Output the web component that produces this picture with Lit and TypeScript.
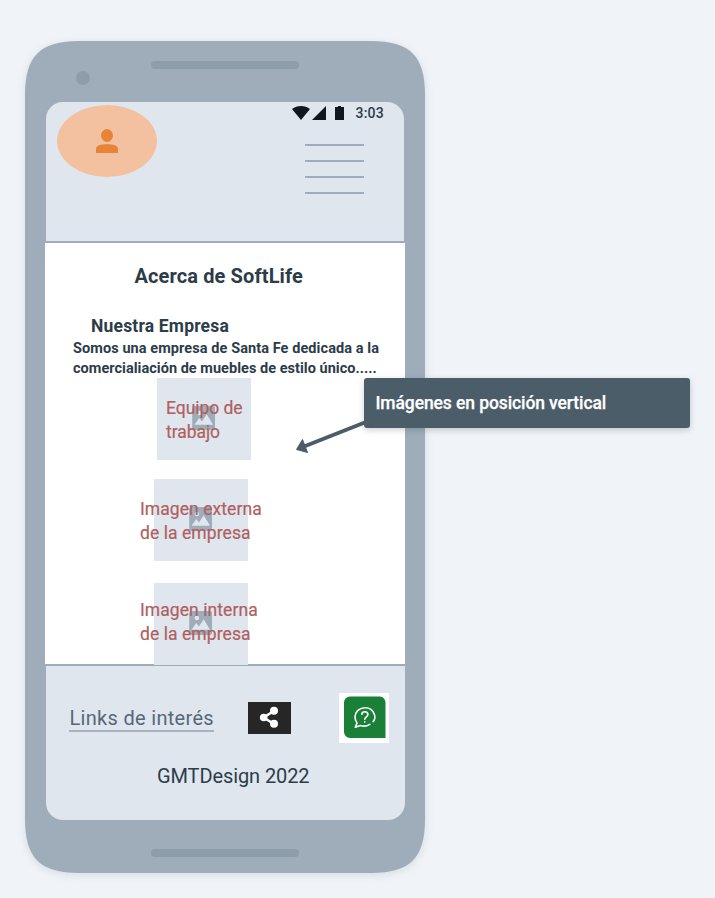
import { LitElement, html, svg, css } from "lit";
import { customElement, property } from "lit/decorators.js";

@customElement("image-slot")
export class ImageSlot extends LitElement {
  @property() caption = "";

  static styles = css`
    :host {
      display: grid;
      position: relative;
      width: 94px;
      height: 81.5px;
      background: #dfe6ee;
    }
    .glyph {
      display: block;
      position: absolute;
      left: 34.5px;
      top: 28px;
      width: 23.5px;
      height: 24px;
    }
    .caption {
      position: absolute;
      left: var(--caption-left, -14px);
      top: var(--caption-top, 18px);
      white-space: pre;
      font-size: 17.5px;
      line-height: 24px;
      letter-spacing: var(--caption-spacing, 0.07px);
      color: #b1605f;
      -webkit-text-stroke: 0.2px #b1605f;
    }
  `;

  render() {
    return html`
      <svg class="glyph" viewBox="0 0 23 24">
        <rect width="23" height="24" rx="2.5" fill="#9eadb9" />
        <circle cx="7.6" cy="7" r="2.3" fill="#dfe6ee" />
        <path d="M2.3 18.7 7 12l2.7 3.6L14.4 8.3 20.8 18.7Z" fill="#dfe6ee" />
      </svg>
      <div class="caption">${this.caption}</div>
    `;
  }
}

@customElement("app-root")
export class AppRoot extends LitElement {
  static styles = css`
    :host {
      display: block;
      position: relative;
      width: 715px;
      height: 898px;
      overflow: hidden;
      background: #f0f4f8;
      font-family: Roboto, "Liberation Sans", sans-serif;
      color: #2c3c49;
    }
    svg {
      display: block;
    }
    .phone {
      position: absolute;
      left: 25px;
      top: 41px;
      width: 400px;
      height: 832px;
      display: flex;
      flex-direction: column;
    }
    .shell {
      position: absolute;
      inset: 0;
      overflow: visible;
      filter: drop-shadow(0 2px 4px rgba(60, 80, 100, 0.14));
    }
    .bezel {
      position: relative;
      height: 61px;
      flex: none;
    }
    .speaker {
      position: relative;
      width: 148px;
      height: 8px;
      border-radius: 4px;
      margin: 20px 0 0 126px;
      background: #8e9dac;
    }
    .camera {
      position: absolute;
      left: 51px;
      top: 30px;
      width: 14px;
      height: 14px;
      border-radius: 50%;
      background: #8e9dac;
    }
    .screen {
      position: relative;
      width: 360px;
      height: 718px;
      margin-left: 20px;
      display: flex;
      flex-direction: column;
      white-space: nowrap;
    }
    .top {
      height: 139px;
      margin: 0 1px;
      border-radius: 17px 17px 0 0;
      background: #dfe6ee;
      display: flex;
      justify-content: space-between;
    }
    .avatar {
      width: 100px;
      height: 72px;
      margin: 3px 0 0 11px;
      border-radius: 50%;
      background: #f3c19f;
      display: grid;
      place-items: center;
    }
    .right {
      width: 112.5px;
    }
    .status {
      display: flex;
      height: 22px;
      align-items: center;
    }
    .clock {
      font-size: 14px;
      font-weight: 500;
      letter-spacing: 0.2px;
      margin-left: 11px;
    }
    .menu {
      width: 59px;
      margin: 20px 0 0 13.5px;
      display: grid;
      gap: 14px;
    }
    .menu i {
      height: 2px;
      background: #9eadb9;
    }
    .content {
      height: 421px;
      margin-top: 2px;
      background: #fff;
    }
    h1,
    h2,
    p {
      margin: 0;
    }
    h1 {
      padding: 19px 0 0 89.5px;
      font-size: 20px;
      line-height: 28px;
      font-weight: 700;
      letter-spacing: 0.12px;
    }
    h2 {
      padding: 24px 0 0 46px;
      font-size: 17.5px;
      line-height: 24px;
      font-weight: 700;
      letter-spacing: 0.18px;
    }
    .about {
      position: relative;
      top: 1px;
      padding-left: 28px;
      font-size: 14.5px;
      line-height: 20px;
      font-weight: 700;
      letter-spacing: 0.08px;
    }
    .tight {
      letter-spacing: 0.03px;
    }
    .gallery {
      display: flex;
      flex-direction: column;
      align-items: flex-start;
      padding-left: 109px;
      position: relative;
      z-index: 1;
    }
    .first {
      margin-left: 3px;
      --caption-left: 9px;
      --caption-spacing: -0.05px;
    }
    .second {
      margin-top: 19.5px;
    }
    .third {
      margin-top: 22.5px;
      --caption-top: 15px;
    }
    .foot {
      height: 154px;
      margin: 2px 0 0 1px;
      border-radius: 0 0 17px 17px;
      background: #dfe6ee;
    }
    .actions {
      display: flex;
      padding: 27px 0 0 23px;
      height: 50px;
    }
    .link {
      box-sizing: border-box;
      width: 145px;
      height: 39px;
      padding: 13px 0 0 0.5px;
      font-size: 20px;
      line-height: 24px;
      letter-spacing: 0.31px;
      color: #566878;
      border-bottom: 2px solid #a7b4c2;
    }
    .share {
      width: 43px;
      height: 32px;
      margin: 9px 0 0 34px;
      background: #262626;
    }
    .help {
      width: 50px;
      height: 50px;
      margin-left: 48px;
      background: #fff;
    }
    .credit {
      padding: 21px 0 0 111px;
      font-size: 20px;
      line-height: 24px;
      letter-spacing: -0.1px;
    }
    .lower {
      margin-top: 29px;
    }
    .arrow {
      position: absolute;
      left: 290px;
      top: 415px;
    }
    .callout {
      position: absolute;
      left: 364px;
      top: 378px;
      box-sizing: border-box;
      width: 326px;
      height: 50px;
      padding-left: 11.5px;
      border-radius: 3px;
      background: #4c5d6a;
      box-shadow: 0 2px 6px rgba(50, 65, 80, 0.25);
      color: #fff;
      font-size: 17.5px;
      line-height: 50px;
      font-weight: 500;
      letter-spacing: -0.1px;
      -webkit-text-stroke: 0.25px #fff;
    }
  `;

  private personIcon = svg`
    <svg width="22" height="24" viewBox="0 0 22 24">
      <ellipse cx="11" cy="6.5" rx="6" ry="6.5" fill="#e88439" />
      <path d="M0 24v-4.2C0 16.6 4.5 15.2 11 15.2s11 1.4 11 4.6V24Z" fill="#e88439" />
    </svg>`;

  private statusIcons = svg`
    <svg width="53" height="14" viewBox="0 0 53 14">
      <g fill="#10171f">
        <path d="M0 3C5-.9 13-.9 18 3L9 14Z" />
        <path d="M20 14 34 0V14Z" />
        <path d="M43 1h3V0h3v1h3v13h-9Z" />
      </g>
    </svg>`;

  private shareIcon = svg`
    <svg width="43" height="32" viewBox="0 0 43 32">
      <path d="M26 9 15.5 15.5 26 22" fill="none" stroke="#fff" stroke-width="2.6" />
      <g fill="#fff">
        <circle cx="26" cy="8.8" r="4" />
        <circle cx="15.7" cy="15.5" r="3.8" />
        <circle cx="26" cy="21.8" r="4" />
      </g>
    </svg>`;

  private helpIcon = svg`
    <svg width="50" height="50" viewBox="0 0 50 50">
      <path d="M5 9.5A6 6 0 0 1 11 3.5H41A6 6 0 0 1 46.5 9.5V45H11A6 6 0 0 1 5 39Z" fill="#1a8038" />
      <g fill="none" stroke="#fff" stroke-width="1.6" stroke-linecap="round" stroke-linejoin="round">
        <path d="M34.2 28.6C36 26.500 36.2 23.500 35.3 21.2 33.8 17 29.8 14.5 25.5 14.7 20 15 16 19 16 24c0 2.400.7 4.300 2 6L16.300 34.200 21.300 32.500C24.500 33.500 28 33.200 30.800 31.300" />
        <path d="M22.800 21.300C23 19.500 24.200 18.700 25.800 18.700c1.900 0 3.100 1.200 3.100 2.800 0 2.200-3.100 2.500-3.100 4.700" />
        <path d="M25.800 28.800v.3" />
      </g>
    </svg>`;

  render() {
    return html`
      <section class="phone">
        <svg class="shell" width="400" height="832" viewBox="0 0 400 832">
          <path
            d="M0 54C0 15 15 0 54 0H346C385 0 400 15 400 54V778C400 817 385 832 346 832H54C15 832 0 817 0 778Z"
            fill="#9eadb9"
          />
        </svg>
        <div class="bezel">
          <div class="camera"></div>
          <div class="speaker"></div>
        </div>
        <main class="screen">
          <header class="top">
            <div class="avatar">${this.personIcon}</div>
            <div class="right">
              <div class="status">${this.statusIcons}<span class="clock">3:03</span></div>
              <div class="menu"><i></i><i></i><i></i><i></i></div>
            </div>
          </header>
          <section class="content">
            <h1>Acerca de SoftLife</h1>
            <h2>Nuestra Empresa</h2>
            <p class="about">
              Somos una empresa de Santa Fe dedicada a la<br /><span class="tight"
                >comercialiación de muebles de estilo único.....</span
              >
            </p>
            <div class="gallery">
              <image-slot class="first" .caption=${"Equipo de\ntrabajo"}></image-slot>
              <image-slot class="second" .caption=${"Imagen externa\nde la empresa"}></image-slot>
              <image-slot class="third" .caption=${"Imagen interna\nde la empresa"}></image-slot>
            </div>
          </section>
          <footer class="foot">
            <div class="actions">
              <div class="link">Links de interés</div>
              <div class="share">${this.shareIcon}</div>
              <div class="help">${this.helpIcon}</div>
            </div>
            <div class="credit">GMTDesign 2022</div>
          </footer>
        </main>
        <div class="speaker lower"></div>
      </section>
      <svg class="arrow" width="80" height="45" viewBox="0 0 80 45">
        <path d="M76 7 14 31.500" stroke="#4c5d6a" stroke-width="4" />
        <path d="M6.500 34.500 12.500 24.500 17.500 37.500Z" fill="#4c5d6a" stroke="#4c5d6a" stroke-width="1" stroke-linejoin="round" />
      </svg>
      <div class="callout">Imágenes en posición vertical</div>
    `;
  }
}
